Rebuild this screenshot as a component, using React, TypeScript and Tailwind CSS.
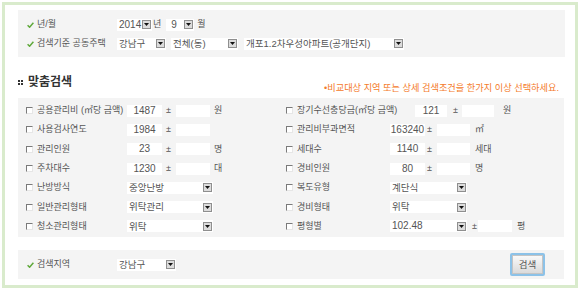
import React from "react";

const FONT = { fontFamily: '"Liberation Sans", "Noto Sans CJK KR", sans-serif' };

function Check() {
  return (
    <svg width="7" height="6" viewBox="0 0 7 6" className="shrink-0">
      <path d="M0.6 3.2 L2.6 5.2 L6.4 0.8" stroke="#5fa83a" strokeWidth="1.5" fill="none" />
    </svg>
  );
}

function Box() {
  return (
    <div className="w-[7px] h-[7px] shrink-0 border-t border-l border-[#7a7a7a] border-r border-b border-r-[#e6e6e6] border-b-[#e6e6e6] bg-white" />
  );
}

function DropBtn() {
  return (
    <div className="w-[9px] h-[9px] shrink-0 border border-[#8f8f8f] bg-[#dcdcdc] flex items-center justify-center">
      <svg width="5" height="3" viewBox="0 0 5 3">
        <path d="M0 0 L5 0 L2.5 3 Z" fill="#111" />
      </svg>
    </div>
  );
}

function Select({ w, text, className = "" }: { w: string; text: string; className?: string }) {
  return (
    <div className={`${w} h-[12px] bg-white flex items-center justify-between pl-[2px] pr-[1px] shrink-0 ${className}`}>
      <span className="text-[9.5px] text-[#555] leading-none whitespace-nowrap">{text}</span>
      <DropBtn />
    </div>
  );
}

function ValBox({ w, v }: { w: string; v: string }) {
  return (
    <div className={`${w} h-[12px] bg-white flex items-center justify-center shrink-0`}>
      <span className="text-[10px] text-[#555] leading-none">{v}</span>
    </div>
  );
}

function Input({ w, className = "" }: { w: string; className?: string }) {
  return <div className={`${w} h-[12px] bg-white shrink-0 ${className}`} />;
}

function Pm({ className = "" }: { className?: string }) {
  return <span className={`text-[9px] text-[#555] leading-none ${className}`}>±</span>;
}

type NumRow = {
  kind: "num";
  label: string;
  v: string;
  unit?: string;
};
type SelRow = { kind: "sel"; label: string; v: string };

function LeftCell({ r }: { r: NumRow | SelRow }) {
  return (
    <div className="flex items-center w-[260px] shrink-0">
      <Box />
      <span className="ml-[4px] w-[90px] text-[9px] text-[#555] whitespace-nowrap leading-none">{r.label}</span>
      {r.kind === "num" ? (
        <>
          <ValBox w="w-[35px]" v={r.v} />
          <Pm className="ml-[4px]" />
          <Input w="w-[34px]" className="ml-[5px]" />
          {r.unit && <span className="ml-[4px] text-[9px] text-[#555] leading-none">{r.unit}</span>}
        </>
      ) : (
        <Select w="w-[86px]" text={r.v} />
      )}
    </div>
  );
}

function RightCell({ r, first, pyeong }: { r: NumRow | SelRow; first?: boolean; pyeong?: boolean }) {
  return (
    <div className="flex items-center">
      <Box />
      <span
        className={`ml-[4px] ${first ? "w-[118px]" : "w-[93px]"} text-[9px] text-[#555] whitespace-nowrap leading-none`}
      >
        {r.label}
      </span>
      {r.kind === "num" ? (
        first ? (
          <>
            <ValBox w="w-[32px]" v={r.v} />
            <Pm className="ml-[6px]" />
            <Input w="w-[32px]" className="ml-[4px]" />
            <span className="ml-[9px] text-[9px] text-[#555] leading-none">{r.unit}</span>
          </>
        ) : (
          <>
            <ValBox w="w-[35px]" v={r.v} />
            <Pm className="ml-[2px]" />
            <Input w="w-[33px]" className="ml-[5px]" />
            {r.unit && <span className="ml-[5px] text-[9px] text-[#555] leading-none">{r.unit}</span>}
          </>
        )
      ) : pyeong ? (
        <>
          <div className="w-[77px] h-[12px] bg-white flex items-center justify-between pl-[2px] pr-[1px] shrink-0">
            <span className="text-[10px] text-[#555] leading-none">{r.v}</span>
            <DropBtn />
          </div>
          <Pm className="ml-[5px]" />
          <Input w="w-[34px]" className="ml-[1px]" />
          <span className="ml-[5px] text-[9px] text-[#555] leading-none">평</span>
        </>
      ) : (
        <Select w="w-[77px]" text={r.v} />
      )}
    </div>
  );
}

const rows: { l: NumRow | SelRow; r: NumRow | SelRow }[] = [
  {
    l: { kind: "num", label: "공용관리비 (㎡당 금액)", v: "1487", unit: "원" },
    r: { kind: "num", label: "장기수선충당금(㎡당 금액)", v: "121", unit: "원" },
  },
  {
    l: { kind: "num", label: "사용검사연도", v: "1984" },
    r: { kind: "num", label: "관리비부과면적", v: "163240", unit: "㎡" },
  },
  {
    l: { kind: "num", label: "관리인원", v: "23", unit: "명" },
    r: { kind: "num", label: "세대수", v: "1140", unit: "세대" },
  },
  {
    l: { kind: "num", label: "주차대수", v: "1230", unit: "대" },
    r: { kind: "num", label: "경비인원", v: "80", unit: "명" },
  },
  {
    l: { kind: "sel", label: "난방방식", v: "중앙난방" },
    r: { kind: "sel", label: "복도유형", v: "계단식" },
  },
  {
    l: { kind: "sel", label: "일반관리형태", v: "위탁관리" },
    r: { kind: "sel", label: "경비형태", v: "위탁" },
  },
  {
    l: { kind: "sel", label: "청소관리형태", v: "위탁" },
    r: { kind: "sel", label: "평형별", v: "102.48" },
  },
];

export default function App() {
  return (
    <div className="w-[580px] h-[293px] bg-white pt-[2px] pl-[2px]" style={FONT}>
      <div className="w-[576px] h-[286px] border-[3px] border-[#d9ebcc] pl-[13px] pr-[10px] pt-[5px] flex flex-col">
        {/* top panel */}
        <div className="h-[47px] bg-[#f4f4f4] pt-[5px] pl-[9px] flex flex-col">
          <div className="h-[19px] flex items-center">
            <Check />
            <span className="ml-[3px] w-[80px] text-[9px] text-[#555] leading-none">년/월</span>
            <div className="w-[35px] h-[12px] bg-white flex items-center justify-between pl-[2px] pr-[1px]">
              <span className="text-[10px] text-[#555] leading-none">2014</span>
              <DropBtn />
            </div>
            <span className="ml-[1px] text-[9px] text-[#555] leading-none">년</span>
            <div className="ml-[5px] w-[28px] h-[12px] bg-white flex items-center justify-between pl-[5px] pr-[1px]">
              <span className="text-[10px] text-[#555] leading-none">9</span>
              <DropBtn />
            </div>
            <span className="ml-[3px] text-[9px] text-[#555] leading-none">월</span>
          </div>
          <div className="h-[19px] flex items-center">
            <Check />
            <span className="ml-[3px] w-[80px] text-[9px] text-[#555] leading-none whitespace-nowrap">검색기준 공동주택</span>
            <Select w="w-[49px]" text="강남구" />
            <Select w="w-[67px]" text="전체(동)" className="ml-[5px]" />
            <Select w="w-[160px]" text="개포1.2차우성아파트(공개단지)" className="ml-[6px]" />
          </div>
        </div>

        {/* header */}
        <div className="h-[41px] flex justify-between">
          <div className="mt-[17px] flex items-center h-[16px]">
            <div className="grid grid-cols-2 gap-[1px] w-[5px]">
              <div className="w-[2px] h-[2px] bg-[#333]" />
              <div className="w-[2px] h-[2px] bg-[#333]" />
              <div className="w-[2px] h-[2px] bg-[#333]" />
              <div className="w-[2px] h-[2px] bg-[#333]" />
            </div>
            <span className="ml-[5px] text-[12px] font-bold text-[#333] leading-none">맞춤검색</span>
          </div>
          <div className="mt-[26px] mr-[6px] h-[12px] flex items-center text-[9.2px] text-[#f47a2a] leading-none whitespace-nowrap">
            •비교대상 지역 또는 상세 검색조건을 한가지 이상 선택하세요.
          </div>
        </div>

        {/* main panel */}
        <div className="h-[139px] bg-[#f4f4f4] pt-[3px] pl-[8px] mr-[1px] flex flex-col">
          {rows.map((row, i) => (
            <div key={i} className="h-[19.3px] flex items-center">
              <LeftCell r={row.l} />
              <RightCell r={row.r} first={i === 0} pyeong={i === 6} />
            </div>
          ))}
        </div>

        {/* bottom panel */}
        <div className="mt-[13px] h-[29px] bg-[#f4f4f4] pl-[9px] pr-[19px] mr-[1px] flex items-center">
          <Check />
          <span className="ml-[3px] w-[80px] text-[9px] text-[#555] leading-none">검색지역</span>
          <Select w="w-[59px]" text="강남구" />
          <div className="flex-1" />
          <button className="w-[35px] h-[23px] rounded-[2px] border-2 border-[#8cc2e8] bg-gradient-to-b from-[#fbfbfb] to-[#d9d9d9] flex items-center justify-center shadow-[inset_0_0_0_1px_#c4c4c4]">
            <span className="text-[9.5px] text-[#555] leading-none">검색</span>
          </button>
        </div>
      </div>
    </div>
  );
}
